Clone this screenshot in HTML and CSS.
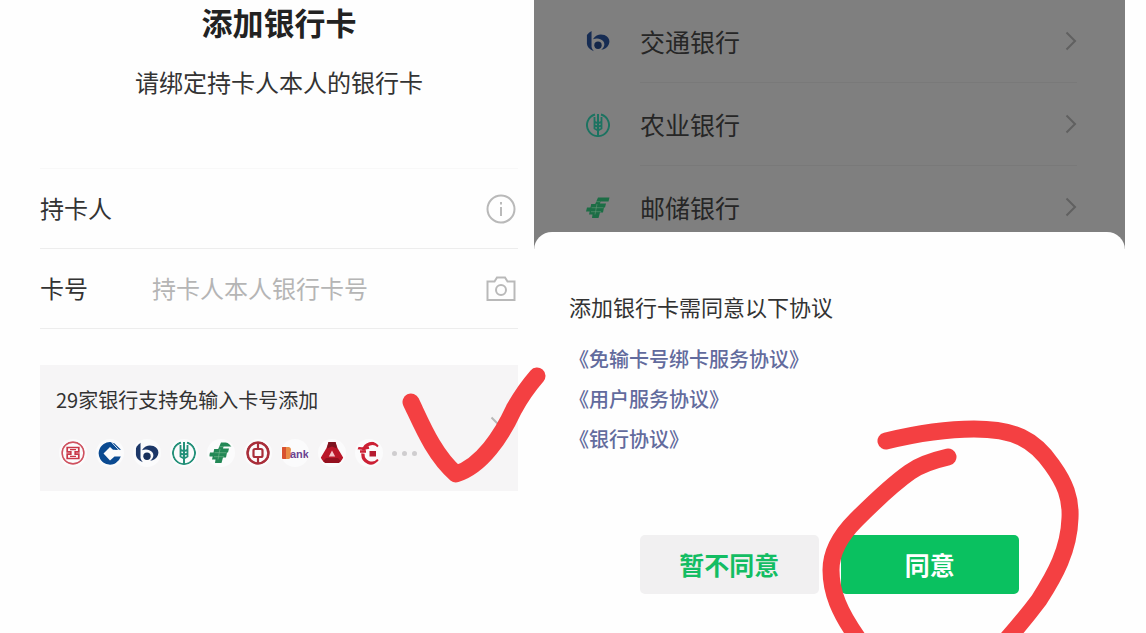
FILE: index.html
```html
<!DOCTYPE html>
<html lang="zh-CN">
<head>
    <meta charset="UTF-8">
    <meta name="viewport" content="width=device-width, initial-scale=1.0">
    <title>添加银行卡</title>
    <link rel="stylesheet" href="styles.css">
</head>
<body>

    <!-- Shared icon shapes -->
    <svg class="sprite" aria-hidden="true">
        <symbol id="icbc" viewBox="0 0 24 24">
            <circle cx="12" cy="12" r="10.9" fill="none" stroke="#cf5260" stroke-width="1.6"/>
            <path d="M6.200 6.500h11.600v4.300h-3.600v2.400h3.600v4.300H6.200v-4.300h3.600v-2.400H6.200z" fill="none" stroke="#c93748" stroke-width="1.700"/>
            <path d="M9 8.700h6M9 15.300h6" stroke="#c93748" stroke-width="1.300"/>
        </symbol>
        <symbol id="ccb" viewBox="0 0 24 24">
            <path d="M14 1.200A11.300 11.300 0 1 0 22.800 15.500h-6.300L12 19.500 5.500 12.500 12 6l3 2.800h4.500z" fill="#0b4a91"/>
            <path d="M16 2l7 6.800h-5.500L12.500 3z" fill="#0b4a91"/>
            <path d="M13.500 1.200l7.500 8" stroke="#dce6f3" stroke-width="1"/>
        </symbol>
        <symbol id="bocom" viewBox="0 0 26 24">
            <path d="M6 0v17.500q.5 2.500 2.500 4.500Q1.500 19.500 1 14V4.500Q3 1.500 6 0z" fill="#1c3768"/>
            <path d="M7.500 9C11 3.500 16 3 20 4.500c5 2 6.500 6.500 4.500 10.500-1.500 3-4.500 5-8 5.500 3.500-3 4.500-7 2-9.500C16 8 11.500 7.500 7.500 9z" fill="#1c3768"/>
            <circle cx="13" cy="15.500" r="4" fill="#18305b"/>
        </symbol>
        <symbol id="abc" viewBox="0 0 24 24">
            <path d="M9 1.500a11 11 0 1 0 6 0" fill="none" stroke="#239079" stroke-width="1.900"/>
            <path d="M12 1v22" stroke="#239079" stroke-width="2"/>
            <path d="M8.500 4v4M15.500 4v4M8.500 8v7.500l3.500 2 3.500-2V8M8.500 8.500l3.500 2 3.500-2M8.500 12l3.500 2 3.500-2" fill="none" stroke="#239079" stroke-width="1.800"/>
        </symbol>
        <symbol id="psbc" viewBox="0 0 24 24">
            <path d="M12 1.500h11.500l-1 4h-8l-.5 2h6L19 11.500h-1l-1 5h-3L12.500 22H6l.5-3.500H3l.7-3H0l1-4h3.500l.7-3.500h4z" fill="#238856"/>
            <path d="M5.500 11.700h12M11 8l-2 10.500M5 15.700h10M10 5.700h4" fill="none" stroke="#7cba94" stroke-width=".6"/>
        </symbol>
        <symbol id="boc" viewBox="0 0 24 24">
            <circle cx="12" cy="12" r="10.500" fill="none" stroke="#a92e3a" stroke-width="2.600"/>
            <rect x="7.500" y="8" width="9" height="8" rx="1.500" fill="none" stroke="#a92e3a" stroke-width="2.200"/>
            <path d="M12 2v6M12 16v6" stroke="#a92e3a" stroke-width="2.200"/>
        </symbol>
        <symbol id="ebank" viewBox="0 0 28 24">
            <path d="M1 6h5v12H1z" fill="#d8502f"/>
            <path d="M5 6h3q3 1 1.500 5Q12 16 8 18H5z" fill="#e98b45"/>
            <text class="ebank-text" x="9" y="17">ank</text>
        </symbol>
        <symbol id="citic" viewBox="0 0 24 24">
            <path d="M8.500 1h7l2 6L24 18l-1.500 4h-21L0 18 6.500 7z" fill="#ba1729"/>
            <path d="M8.500 1h7l1.500 6.500-5-2-5 2z" fill="#7c1420"/>
            <path d="M1.500 22L6 17h12l4.500 5z" fill="#94111f"/>
            <path d="M12 9.500l3.200 6H8.800z" fill="#f4c4c8"/>
        </symbol>
        <symbol id="huaxia" viewBox="0 0 24 24">
            <path d="M21.500 5A9 9 0 0 0 6.500 9.500M6 12.500A8.800 8.800 0 0 0 21.500 19" fill="none" stroke="#cc2035" stroke-width="3.300"/>
            <path d="M0 7q6 1 12-.5M3 10.500h6" fill="none" stroke="#cc2035" stroke-width="2.500"/>
            <path d="M12.500 10h6.500v5.500h-6.500z" fill="#b51c31"/>
        </symbol>
        <symbol id="chevron" viewBox="0 0 12 20">
            <path d="M1.500 1.500L10 10l-8.500 8.500" fill="none" stroke="currentColor" stroke-width="2"/>
        </symbol>
    </svg>

    <div class="page">
        <section class="add-card">
            <h1>添加银行卡</h1>
            <p class="subtitle">请绑定持卡人本人的银行卡</p>

            <form class="card-form">
                <div class="form-row">
                    <label for="holder">持卡人</label>
                    <input type="text" id="holder" name="holder">
                    <button type="button" class="icon-button" aria-label="持卡人说明">
                        <svg viewBox="0 0 30 30" fill="none" stroke="#b9b9b9" stroke-width="2">
                            <circle cx="15" cy="15" r="13.500"/>
                            <path d="M15 13v9M15 8v2.500"/>
                        </svg>
                    </button>
                </div>
                <div class="form-row">
                    <label for="number">卡号</label>
                    <input type="text" id="number" name="number" placeholder="持卡人本人银行卡号">
                    <button type="button" class="icon-button" aria-label="拍照识别卡号">
                        <svg viewBox="0 0 30 30" fill="none" stroke="#b9b9b9" stroke-width="2">
                            <path d="M1.500 7.500h7l2.500-4h8l2.500 4h7V26h-27z"/>
                            <circle cx="15" cy="16" r="5"/>
                        </svg>
                    </button>
                </div>
            </form>

            <div class="quick-add">
                <div class="quick-add-body">
                    <p>29家银行支持免输入卡号添加</p>
                    <div class="bank-icons">
                        <svg><use href="#icbc"/></svg>
                        <svg><use href="#ccb"/></svg>
                        <svg><use href="#bocom"/></svg>
                        <svg><use href="#abc"/></svg>
                        <svg><use href="#psbc"/></svg>
                        <svg><use href="#boc"/></svg>
                        <svg class="wide"><use href="#ebank"/></svg>
                        <svg><use href="#citic"/></svg>
                        <svg><use href="#huaxia"/></svg>
                        <span class="dots"><i></i><i></i><i></i></span>
                    </div>
                </div>
                <svg class="chevron"><use href="#chevron"/></svg>
                <svg class="mark tick" viewBox="0 0 160 140">
                    <path d="M21 43C32 66 44 96 66 115C92 107 112 76 124 50Q134 32 147 17"/>
                </svg>
            </div>
        </section>

        <section class="agreement">
            <ul class="bank-list">
                <li>
                    <svg class="bank-icon"><use href="#bocom"/></svg>
                    <div class="bank-name">交通银行<svg class="chevron"><use href="#chevron"/></svg></div>
                </li>
                <li>
                    <svg class="bank-icon"><use href="#abc"/></svg>
                    <div class="bank-name">农业银行<svg class="chevron"><use href="#chevron"/></svg></div>
                </li>
                <li>
                    <svg class="bank-icon"><use href="#psbc"/></svg>
                    <div class="bank-name">邮储银行<svg class="chevron"><use href="#chevron"/></svg></div>
                </li>
            </ul>

            <div class="sheet">
                <h2>添加银行卡需同意以下协议</h2>
                <div class="links">
                    <a href="#">《免输卡号绑卡服务协议》</a>
                    <a href="#">《用户服务协议》</a>
                    <a href="#">《银行协议》</a>
                </div>
                <div class="actions">
                    <button type="button" class="decline">暂不同意</button>
                    <div class="agree-wrap">
                        <button type="button" class="agree">同意</button>
                        <svg class="mark ring" viewBox="0 0 300 260">
                            <path d="M87 31C120 23 147 19 175 19C215 19 235 29 253 55C266 73 272 88 271 108C270 140 256 165 240 190Q222 214 200 238"/>
                            <path d="M149 47C136 50 122 54 111 62C91 76 72 95 57 110C38 129 32 147 32 160C32 182 40 202 60 230"/>
                        </svg>
                    </div>
                </div>
            </div>
        </section>
    </div>

</body>
</html>
```

FILE: styles.css
```css
* {
    margin: 0;
    padding: 0;
    box-sizing: border-box;
}

body {
    font-family: "Noto Sans CJK SC", sans-serif;
    background-color: #fefefe;
    color: #333;
}

button,
input {
    font: inherit;
    border: none;
    background: none;
}

button {
    cursor: pointer;
}

.sprite {
    display: none;
}

.page {
    display: grid;
    grid-template-columns: 534fr 591fr;
    min-height: 100vh;
    padding-right: 21px;
    overflow: hidden;
}

/* Card form */
.add-card {
    position: relative;
    z-index: 1;
    padding: 0 16px 24px 40px;
}

h1 {
    font-size: 31px;
    line-height: 44px;
    text-align: center;
    color: #222;
}

.subtitle {
    margin-top: 20px;
    font-size: 24px;
    line-height: 36px;
    text-align: center;
}

.card-form {
    margin-top: 68px;
    border-top: 1px solid #f8f8f8;
}

.form-row {
    display: flex;
    align-items: center;
    height: 80px;
    font-size: 24px;
    line-height: 36px;
    border-bottom: 1px solid #ededed;
}

.form-row label {
    width: 112px;
    padding-bottom: 2px;
}

.form-row input {
    flex: 1;
    min-width: 0;
    padding-bottom: 2px;
    outline: none;
}

.form-row input::placeholder {
    color: #b5b5b5;
}

.icon-button {
    width: 30px;
    height: 30px;
    margin-right: 2px;
}

.icon-button svg {
    display: block;
}

/* Banner with supported banks */
.quick-add {
    position: relative;
    display: flex;
    align-items: center;
    margin-top: 36px;
    padding: 20px 16px 24px;
    background-color: #f6f5f6;
}

.quick-add-body {
    flex: 1;
}

.quick-add p {
    font-size: 20px;
    line-height: 30px;
}

.bank-icons {
    display: flex;
    align-items: center;
    gap: 9px;
    margin-top: 24px;
    margin-left: 3px;
}

.bank-icons svg {
    width: 28px;
    height: 28px;
    padding: 2px;
    border-radius: 50%;
    background-color: #fbfbfc;
}

.bank-icons .wide {
    padding: 0;
}

.ebank-text {
    font-family: "Liberation Sans", sans-serif;
    font-size: 11px;
    font-weight: bold;
    fill: #6c4491;
}

.dots {
    display: flex;
    gap: 5px;
}

.dots i {
    width: 5px;
    height: 5px;
    border-radius: 50%;
    background-color: #cfcdcf;
}

.chevron {
    width: 12px;
    height: 20px;
    color: #b8b8b8;
}

/* Hand-drawn marks */
.mark {
    position: absolute;
    fill: none;
    stroke: #f44042;
    stroke-width: 17px;
    stroke-linecap: round;
    stroke-linejoin: round;
    pointer-events: none;
}

.tick {
    top: -6px;
    right: -32px;
    width: 160px;
    height: 140px;
}

.ring {
    top: -125px;
    left: -42px;
    width: 300px;
    height: 260px;
}

/* Dimmed bank list */
.bank-list {
    list-style: none;
    background-color: #7f7f7f;
}

.bank-list li {
    display: flex;
    align-items: center;
    gap: 30px;
    padding: 0 48px 0 52px;
}

.bank-icon {
    width: 24px;
    height: 24px;
    filter: brightness(0.8);
}

.bank-name {
    flex: 1;
    display: flex;
    align-items: center;
    justify-content: space-between;
    height: 83px;
    font-size: 25px;
    color: #262626;
    border-bottom: 1px solid #797979;
}

.bank-list .chevron {
    color: #606060;
}

/* Agreement sheet */
.sheet {
    position: relative;
    margin-top: -17px;
    padding: 58px 35px 39px;
    border-radius: 18px 18px 0 0;
    background-color: #fefefe;
}

h2 {
    font-size: 22px;
    font-weight: normal;
    line-height: 32px;
}

.links {
    display: flex;
    flex-direction: column;
    align-items: flex-start;
    margin-top: 17px;
}

.links a {
    font-size: 20px;
    font-weight: 500;
    line-height: 40px;
    color: #626b9d;
    text-decoration: none;
}

.actions {
    display: flex;
    gap: 22px;
    margin-top: 76px;
    padding: 0 71px;
}

.agree-wrap {
    position: relative;
}

.decline,
.agree-wrap {
    flex: 1;
}

.decline,
.agree {
    height: 59px;
    padding-bottom: 2px;
    font-size: 25px;
    font-weight: bold;
    border-radius: 5px;
}

.decline {
    color: #13bd63;
    background-color: #f1f0f1;
}

.agree {
    width: 100%;
    color: #fff;
    background-color: #0ac160;
}
```
